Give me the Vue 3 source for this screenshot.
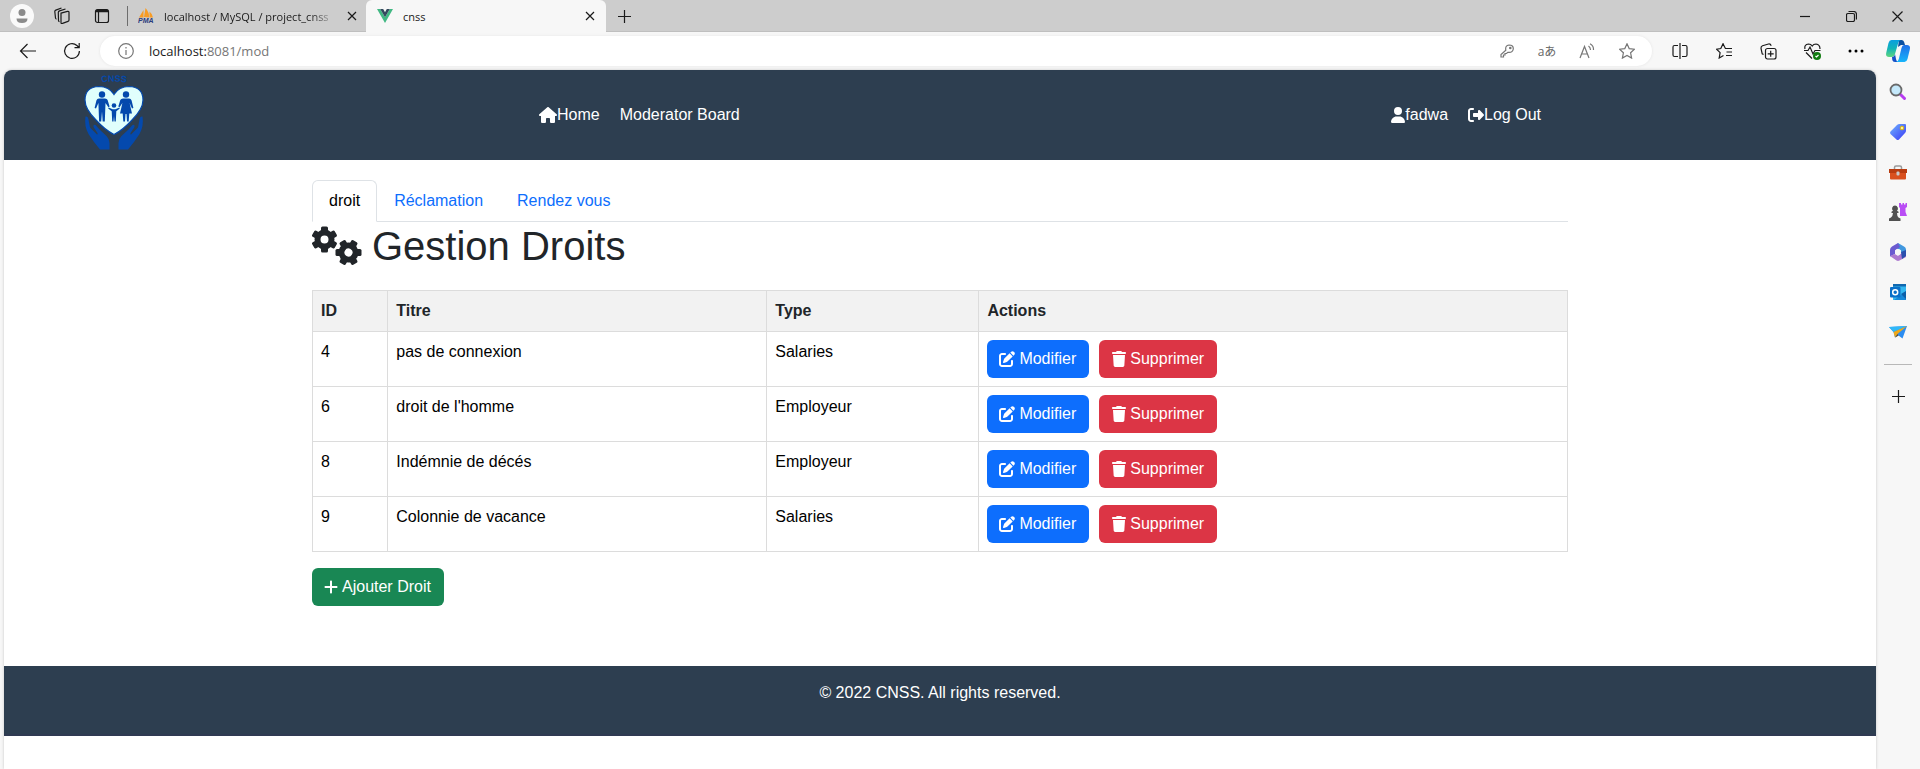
<script setup>
import { ref } from 'vue'

const droits = ref([
  { id: 4, titre: 'pas de connexion', type: 'Salaries' },
  { id: 6, titre: "droit de l'homme", type: 'Employeur' },
  { id: 8, titre: 'Indémnie de décés', type: 'Employeur' },
  { id: 9, titre: 'Colonnie de vacance', type: 'Salaries' },
])

const teeth = [0, 60, 120, 180, 240, 300]

const glyphs = {
  house: 'M575.8 255.5c0 18-15 32.1-32 32.1h-32l.7 160.2c0 2.7-.2 5.4-.5 8.1V472c0 22.1-17.9 40-40 40H456c-1.1 0-2.2 0-3.3-.1c-1.4 .1-2.8 .1-4.2 .1H416 392c-22.1 0-40-17.9-40-40V448 384c0-17.7-14.3-32-32-32H256c-17.7 0-32 14.3-32 32v64 24c0 22.1-17.9 40-40 40H160 128.1c-1.5 0-3-.1-4.5-.2c-1.2 .1-2.4 .2-3.6 .2H104c-22.1 0-40-17.9-40-40V360c0-.9 0-1.9 .1-2.8V287.6H32c-18 0-32-14-32-32.1c0-9 3-17 10-24L266.4 8c7-7 15-8 22-8s15 2 21 7L564.8 231.5c8 7 12 15 11 24z',
  user: 'M224 256A128 128 0 1 0 224 0a128 128 0 1 0 0 256zm-45.7 48C79.8 304 0 383.8 0 482.3C0 498.7 13.3 512 29.7 512H418.3c16.4 0 29.7-13.3 29.7-29.7C448 383.8 368.2 304 269.7 304H178.3z',
  logout: 'M377.9 105.9L500.7 228.7c7.2 7.2 11.3 17.1 11.3 27.3s-4.1 20.1-11.3 27.3L377.9 406.1c-6.4 6.4-15 9.9-24 9.9c-18.7 0-33.9-15.2-33.9-33.9l0-62.1-128 0c-17.7 0-32-14.3-32-32l0-64c0-17.7 14.3-32 32-32l128 0 0-62.1c0-18.7 15.2-33.9 33.9-33.9c9 0 17.6 3.6 24 9.9zM160 96L96 96c-17.7 0-32 14.3-32 32l0 256c0 17.7 14.3 32 32 32l64 0c17.7 0 32 14.3 32 32s-14.3 32-32 32l-64 0c-53 0-96-43-96-96L0 128C0 75 43 32 96 32l64 0c17.7 0 32 14.3 32 32s-14.3 32-32 32z',
  edit: 'M471.6 21.7c-21.9-21.9-57.3-21.9-79.2 0L362.3 51.7l97.9 97.9 30.1-30.1c21.9-21.9 21.9-57.3 0-79.2L471.6 21.7zm-299.2 220c-6.1 6.1-10.8 13.6-13.5 21.9l-29.6 88.8c-2.9 8.6-.6 18.1 5.8 24.6s15.9 8.7 24.6 5.8l88.8-29.6c8.2-2.7 15.7-7.4 21.9-13.5L437.7 172.3 339.7 74.3 172.4 241.7zM96 64C43 64 0 107 0 160V416c0 53 43 96 96 96H352c53 0 96-43 96-96V320c0-17.7-14.3-32-32-32s-32 14.3-32 32v96c0 17.7-14.3 32-32 32H96c-17.7 0-32-14.3-32-32V160c0-17.7 14.3-32 32-32h96c17.7 0 32-14.3 32-32s-14.3-32-32-32H96z',
  trash: 'M135.2 17.7L128 32H32C14.3 32 0 46.3 0 64S14.3 96 32 96H416c17.7 0 32-14.3 32-32s-14.3-32-32-32H320l-7.2-14.3C307.4 6.8 296.3 0 284.2 0H163.8c-12.1 0-23.2 6.8-28.6 17.7zM416 128H32L53.2 467c1.6 25.3 22.6 45 47.9 45H346.9c25.3 0 46.3-19.7 47.9-45L416 128z',
  plus: 'M256 80c0-17.7-14.3-32-32-32s-32 14.3-32 32V224H48c-17.7 0-32 14.3-32 32s14.3 32 32 32H192V432c0 17.7 14.3 32 32 32s32-14.3 32-32V288H400c17.7 0 32-14.3 32-32s-14.3-32-32-32H256V80z',
}
</script>

<template>
  <div class="browser">
    <header class="tabstrip">
      <button class="tool narrow" aria-label="Profile">
        <svg width="24" height="24" viewBox="0 0 24 24"><circle cx="12" cy="12" r="12" fill="#fafafa" /><circle cx="12" cy="8.500" r="3.500" fill="#8b8b8b" /><path d="M6.500 14.500h11q0 4.500-5.500 4.500t-5.500-4.500z" fill="#8b8b8b" /></svg>
      </button>
      <button class="tool" aria-label="Workspaces">
        <svg class="line" width="18" height="18" viewBox="0 0 18 18"><path d="M8 6.200l6.500-1.800q1.500-.3 1.500 1.200v7.500q0 1-1 1.300l-5.500 2q-1.500.5-1.500-1zM5.500 13.500l-.2-8q0-1.200 1.200-1.600L12.500 2M2.500 11l-.7-6.500q0-1 1-1.400L8.500 1M2.500 11q.2 1 1 1.200M5.500 13.500q.1 1 1 1.300" /></svg>
      </button>
      <button class="tool narrow" aria-label="Tab actions menu">
        <svg class="line" width="16" height="16" viewBox="0 0 16 16"><rect x="1.500" y="1.500" width="13" height="13" rx="2" /><path d="M2 3h12" stroke-width="2.500" /><path d="M4.500 4v10.500" /></svg>
      </button>
      <span class="divider"></span>
      <div class="tab">
        <svg width="16" height="16" viewBox="0 0 16 16"><path d="M1 9.500L5.500 2v7.500zM6 9L7.500 0q4 4.500 3.500 9.500zM11.500 3.500q3 2.500 3.500 6h-3.500z" fill="#f89c24" /><text x="0" y="15" class="pma">PMA</text></svg>
        <span class="tab-title faded">localhost / MySQL / project_cnss</span>
        <button class="tab-close" aria-label="Close tab"><svg class="line" width="10" height="10" viewBox="0 0 10 10"><path d="M1 1l8 8M9 1l-8 8" /></svg></button>
      </div>
      <div class="tab active">
        <svg width="16" height="16" viewBox="0 0 16 16"><path d="M0 1h3.200L8 9.300 12.800 1H16L8 15z" fill="#41b883" /><path d="M3.200 1h3L8 4.200 9.800 1h3L8 9.300z" fill="#34495e" /></svg>
        <span class="tab-title">cnss</span>
        <button class="tab-close" aria-label="Close tab"><svg class="line" width="10" height="10" viewBox="0 0 10 10"><path d="M1 1l8 8M9 1l-8 8" /></svg></button>
      </div>
      <button class="tool narrow" aria-label="New tab"><svg class="line" width="13" height="13" viewBox="0 0 13 13"><path d="M6.500 0v13M0 6.500h13" /></svg></button>
      <div class="window-buttons">
        <button aria-label="Minimize"><svg class="line" width="10" height="10" viewBox="0 0 10 10"><path d="M0 5.500h10" /></svg></button>
        <button aria-label="Restore"><svg class="line" width="11" height="11" viewBox="0 0 11 11"><rect x=".5" y="2.500" width="8" height="8" rx="1.500" /><path d="M2.500 .5h5q3 0 3 3v5" /></svg></button>
        <button aria-label="Close"><svg class="line" width="11" height="11" viewBox="0 0 11 11"><path d="M.5 .5l10 10M10.500 .5l-10 10" /></svg></button>
      </div>
    </header>

    <div class="toolbar">
      <button class="tool" aria-label="Back"><svg class="line" width="18" height="16" viewBox="0 0 18 16"><path d="M1.500 8H17M8.500 1L1.500 8l7 7" /></svg></button>
      <button class="tool" aria-label="Refresh"><svg class="line" width="18" height="18" viewBox="0 0 18 18"><path d="M16.400 9a7.400 7.400 0 1 1-2.500-5.500L16 5.500M16.200 1v4.700h-4.700" /></svg></button>
      <div class="address">
        <svg class="line gray" width="16" height="16" viewBox="0 0 16 16"><circle cx="8" cy="8" r="7.300" /><path d="M8 7v5M8 4v1.500" /></svg>
        <span class="url" role="textbox" aria-label="Address">localhost:<span>8081/mod</span></span>
        <div class="address-tools">
          <button aria-label="Passwords"><svg class="line gray" width="14" height="14" viewBox="0 0 14 14"><path d="M1 13v-2.500L5.800 6.200Q5 1.500 9 1q4.500 0 4.300 4-.8 4-5.500 3.300L6.500 9.500H5V11H3.500v2z" /><circle cx="10.300" cy="4" r=".7" /></svg></button>
          <button aria-label="Translate" class="glyph">aあ</button>
          <button aria-label="Read aloud"><svg class="line gray" width="16" height="16" viewBox="0 0 16 16"><path d="M1 15L5.500 3.500 10 15M2.500 11h6M9.500 3q2 1.500 2 4M11 .8q3.800 2 3.500 6.200" /></svg></button>
          <button aria-label="Favorite"><svg class="line gray" width="16" height="16" viewBox="0 0 16 16"><path d="M8 .8l2.200 4.800 5.200.6-3.800 3.600 1 5.300L8 12.500l-4.600 2.600 1-5.300L.6 6.200l5.200-.6z" /></svg></button>
        </div>
      </div>
      <div class="actions">
        <button class="tool" aria-label="Split screen"><svg class="line" width="16" height="16" viewBox="0 0 16 16"><path d="M6 2.500H2.500Q1 2.500 1 4v8q0 1.500 1.500 1.500H6M10 2.500h3.500Q15 2.500 15 4v8q0 1.500-1.500 1.500H10M8 0v16" /></svg></button>
        <button class="tool" aria-label="Favorites"><svg class="line" width="17" height="16" viewBox="0 0 17 16"><path d="M9.500 5.500h-.1L7 .8 4.800 5.500.6 6.200l3.500 3.500-.9 5.300L7.500 12.500M7 .8l2.400 4.700H16M10.500 9H16M10 12.500h6" /></svg></button>
        <button class="tool" aria-label="Collections"><svg class="line" width="17" height="17" viewBox="0 0 17 17"><rect x="5.500" y="5.500" width="10.500" height="10.500" rx="2" /><path d="M10.700 7.800v6M7.700 10.800h6M3.500 11.500l-1.300-.7L1 5.500Q.8 3.500 2.500 2.800l6-1.800q2-.3 2.700 1.700" /></svg></button>
        <button class="tool" aria-label="Browser essentials"><svg class="line" width="17" height="17" viewBox="0 0 17 17"><path d="M1 6Q0 1.500 4.500 1 7 1 8.200 3 9.500 1 12 1q4 .5 4 5M2 9.500l6 6M0 7.500h4L6 4l3 7 2-3.500h5.500" /><circle cx="13" cy="13" r="4" fill="#107c10" stroke="none" /><path d="M11.500 13l1 1 2-2" stroke="#fff" /></svg></button>
        <button class="tool" aria-label="Settings and more"><svg width="16" height="4" viewBox="0 0 16 4"><circle cx="2" cy="2" r="1.500" /><circle cx="8" cy="2" r="1.500" /><circle cx="14" cy="2" r="1.500" /></svg></button>
      </div>
      <button class="tool" aria-label="Copilot">
        <svg width="24" height="22" viewBox="0 0 24 22">
          <defs>
            <linearGradient id="cpA" x1="0" y1="0" x2="0" y2="1"><stop offset="0" stop-color="#0a9fe0" /><stop offset=".5" stop-color="#12b3b8" /><stop offset="1" stop-color="#5fd67e" /></linearGradient>
            <linearGradient id="cpB" x1="0" y1="0" x2="0" y2="1"><stop offset="0" stop-color="#1f6fe8" /><stop offset="1" stop-color="#17b5fa" /></linearGradient>
          </defs>
          <path d="M13 0h2.500q2 0 2.600 2L19 5h-4l-3 2z" fill="#0b4fa0" />
          <path d="M5.500 0H15q-2 0-2.800 3L9 14q-.8 3-3.500 3H3Q-.8 17 .3 12.500L2.500 3Q3.300 0 5.500 0z" fill="url(#cpA)" />
          <path d="M6 17q2.500 0 3-3l1 5q.5 3 3 3H9q-2.300 0-2.700-2z" fill="#1550c8" />
          <path d="M18 5h3q3.800 0 2.800 4.500L21.500 19q-.8 3-3 3H10q2 0 2.800-3L15.500 8q.7-3 2.500-3z" fill="url(#cpB)" />
        </svg>
      </button>
    </div>

    <div class="viewport">
      <div class="page">
        <nav class="navbar" aria-label="Main">
          <a href="#" class="brand" aria-label="CNSS">
            <svg width="60" height="78" viewBox="0 0 60 78">
              <defs><path id="arc" d="M14 11q16-3 32 0" /></defs>
              <text class="logo-text"><textPath href="#arc" startOffset="50%" text-anchor="middle">CNSS</textPath></text>
              <path d="M30 62.500Q21 58 12 48 1 37 1 28 1 15 15 14.500q10 0 15 8 5-8 15-8Q59 15 59 28q0 9-11 20-9 10-18 14.500z" fill="#e0fffc" stroke="#0449ad" stroke-width="1.200" />
              <g fill="#0449ad">
                <circle cx="18" cy="22.500" r="3.200" />
                <path d="M15 26.500h6q2 0 2.600 1.500l2 6.500-1.200.8-2.900-4.300L20.800 49.500h-2.100L18 39.500l-.8 10h-2.100L14.400 31 12 36.500l-1.400-.5L12.400 28.500q.6-2 2.600-2z" />
                <circle cx="42" cy="22.500" r="3.200" />
                <path d="M39 26.500h6q2 0 2.600 2L49.400 36l-1.400.5L45.600 31 48 41.500h-2.700l-.6 8h-1.700L42.500 42h-1L41 49.500h-1.700L38.700 41.500H36L38.400 31l-2.900 4.300-1.200-.8 2-6.500Q37 26.500 39 26.500z" />
                <circle cx="30" cy="33.500" r="2.300" />
                <path d="M24.600 35.500l4 1.700h2.800l4-1.700.4 1-3.500 2.700-.5 10.300h-1.300L30 44l-.5 5.500h-1.300l-.5-10.300-3.500-2.700z" />
                <path d="M1.500 44.500q2.500-.5 3 3l1.500 8 7 7q1 0 .5-1.500L9.500 55q-.5-3 2-2l4 4.500 7 6.500q3 3 3 7v6.500H16L10 70 4.500 62Q0 54 1.500 44.500z" />
                <path d="M58.500 44.500q-2.500-.5-3 3l-1.500 8-7 7q-1 0-.5-1.500l4-6q.5-3-2-2l-4 4.500-7 6.500q-3 3-3 7v6.500H44L50 70l5.500-8q4.500-8 3-17.500z" />
              </g>
            </svg>
          </a>
          <div class="links">
            <a href="#"><svg width="18" height="16" viewBox="0 0 576 512"><path :d="glyphs.house" /></svg>Home</a>
            <a href="#">Moderator Board</a>
          </div>
          <div class="links account">
            <a href="#"><svg width="14" height="16" viewBox="0 0 448 512"><path :d="glyphs.user" /></svg>fadwa</a>
            <a href="#"><svg width="16" height="16" viewBox="0 0 512 512"><path :d="glyphs.logout" /></svg>Log Out</a>
          </div>
        </nav>

        <main class="container">
          <div class="nav-tabs" role="tablist">
            <button role="tab" aria-selected="true" class="selected">droit</button>
            <button role="tab" aria-selected="false">Réclamation</button>
            <button role="tab" aria-selected="false">Rendez vous</button>
          </div>

          <h1>
            <svg width="50" height="40" viewBox="0 0 50 40">
              <g v-for="(gear, i) in [{ x: 12.5, y: 13.5, r: 0 }, { x: 36.5, y: 26.5, r: 30 }]" :key="i" :transform="`translate(${gear.x} ${gear.y}) rotate(${gear.r})`">
                <circle r="7" fill="none" stroke="currentColor" stroke-width="6" />
                <rect v-for="a in teeth" :key="a" x="-3.500" y="-13" width="7" height="6" rx="1.500" :transform="`rotate(${a})`" />
              </g>
            </svg>
            Gestion Droits
          </h1>

          <table>
            <colgroup><col class="c-id" /><col class="c-titre" /><col class="c-type" /><col /></colgroup>
            <thead>
              <tr><th scope="col">ID</th><th scope="col">Titre</th><th scope="col">Type</th><th scope="col">Actions</th></tr>
            </thead>
            <tbody>
              <tr v-for="d in droits" :key="d.id">
                <td>{{ d.id }}</td>
                <td>{{ d.titre }}</td>
                <td>{{ d.type }}</td>
                <td>
                  <div class="row-actions">
                    <button class="btn primary"><svg width="16" height="16" viewBox="0 0 512 512"><path :d="glyphs.edit" /></svg>Modifier</button>
                    <button class="btn danger"><svg width="14" height="16" viewBox="0 0 448 512"><path :d="glyphs.trash" /></svg>Supprimer</button>
                  </div>
                </td>
              </tr>
            </tbody>
          </table>

          <button class="btn success"><svg width="14" height="16" viewBox="0 0 448 512"><path :d="glyphs.plus" /></svg>Ajouter Droit</button>
        </main>

        <footer class="footer">© 2022 CNSS. All rights reserved.</footer>
      </div>

      <aside class="sidebar" aria-label="Browser sidebar">
        <button aria-label="Search"><svg width="18" height="18" viewBox="0 0 18 18"><path d="M10.500 10.500L15.500 15.500" stroke="#b73cf0" stroke-width="3" stroke-linecap="round" /><circle cx="7" cy="7" r="5.500" fill="#c5e9fb" stroke="#6a6a6a" stroke-width="1.800" /></svg></button>
        <button aria-label="Shopping"><svg width="18" height="18" viewBox="0 0 18 18"><defs><linearGradient id="tag" x1="0" y1="0" x2="1" y2="1"><stop offset="0" stop-color="#6fb4ff" /><stop offset="1" stop-color="#3a38f5" /></linearGradient></defs><path d="M8 2q1-1 2.500-1H16q1 0 1 1v5.500q0 1.500-1 2.500l-6 6.500q-1.500 1-2.500 0L1.500 11q-1-1.500 0-2.500z" fill="url(#tag)" /><circle cx="13" cy="5" r="1.800" fill="#f8f0a0" stroke="#e6b800" /></svg></button>
        <button aria-label="Tools"><svg width="18" height="18" viewBox="0 0 18 18"><path d="M5.500 6V4.500Q5.500 3 7 3h4q1.500 0 1.500 1.500V6" fill="none" stroke="#9a9a9a" stroke-width="1.500" /><rect x="1" y="7" width="16" height="9.500" rx="1" fill="#d9501e" /><path d="M0 6h18v4H0z" fill="#b93c10" /><rect x="7.500" y="8.500" width="3" height="4" rx="1" fill="#c9c9c9" /></svg></button>
        <button aria-label="Games"><svg width="18" height="18" viewBox="0 0 18 18"><path d="M10 0h2v1.500h1.500V0h1.500v1.500h1.500V0H18v4l-1.500 1v4l1.500 4h-7V5l-1-1z" fill="#b94df5" /><path d="M6 2.500a3 3 0 0 1 2 5.200l1.500 1V10H8q0 3 1.500 4.500l2 1V18H0v-2.500l2-1Q3.800 13 4 10H2.500V8.700l1.500-1a3 3 0 0 1 2-5.200z" fill="#505050" /></svg></button>
        <button aria-label="Microsoft 365"><svg width="18" height="18" viewBox="0 0 18 18"><path d="M9 0l6 3.500q2 1 2 3V12l-5-3V7.500L6.500 4.500z" fill="#4198df" /><path d="M9 0L3 3.500Q1 4.500 1 7v6.500L6 11V7.500l5-3.500z" fill="#6b5bd0" /><path d="M1 13l6.500 4.500q1.500.8 3 0L17 14V9l-5 1.500L9 13l-3-2z" fill="#ad7ad0" /><path d="M12 9l5-2v6l-4 3z" fill="#2b4fae" /><circle cx="9" cy="9" r="3" fill="#f7f7f7" /></svg></button>
        <button aria-label="Outlook"><svg width="18" height="18" viewBox="0 0 18 18"><path d="M4 1h13v16H4z" fill="#35b8f1" /><path d="M4 1h13v2.500H4z" fill="#1068b0" /><path d="M17 8.500v8.500H5z" fill="#1688d8" /><path d="M12 11l5-3v8z" fill="#0c5fa8" /><rect x="1" y="4" width="10.500" height="10.500" rx="1" fill="#0a6fc8" /><circle cx="6.200" cy="9.200" r="2.500" fill="none" stroke="#fff" stroke-width="1.500" /></svg></button>
        <button aria-label="Drop"><svg width="18" height="18" viewBox="0 0 18 18"><path d="M0 4l18-1-4.500 12.500-4-3-3.500 2L4.500 9z" fill="#2b8cf0" /><path d="M0 4l18-1L4.500 9z" fill="#30b8f8" /><path d="M18 3L4.500 9 6 14.500 8.500 11z" fill="#f0a818" /><path d="M8.500 11l1 1.500-3.500 2z" fill="#704c20" /></svg></button>
        <hr />
        <button aria-label="Customize"><svg class="line" width="13" height="13" viewBox="0 0 13 13"><path d="M6.500 0v13M0 6.500h13" /></svg></button>
      </aside>
    </div>
  </div>
</template>

<style>
body {
  background: #f7f7f7;
}
</style>

<style scoped>
* {
  box-sizing: border-box;
}
.browser {
  display: flex;
  flex-direction: column;
  min-height: 100vh;
  font-family: "Open Sans", "Noto Sans", sans-serif;
  color: #1a1a1a;
}
button {
  display: inline-flex;
  align-items: center;
  justify-content: center;
  border: 0;
  padding: 0;
  background: none;
  color: inherit;
  font: inherit;
  cursor: pointer;
}
svg {
  flex: none;
}
.line {
  fill: none;
  stroke: #1a1a1a;
  stroke-width: 1.2;
}
.line.gray {
  stroke: #767676;
}
.tabstrip {
  display: flex;
  align-items: center;
  height: 32px;
  padding-left: 4px;
  background: #cdcdcd;
  box-shadow: inset 0 -1px #bfbfbf;
}
.tool {
  width: 44px;
  height: 32px;
}
.tool.narrow {
  width: 36px;
}
.divider {
  width: 1px;
  height: 20px;
  margin-left: 7px;
  background: #6d6d6d;
}
.tab {
  display: flex;
  align-items: center;
  gap: 10px;
  width: 238px;
  height: 32px;
  padding: 0 8px 0 10px;
  font-size: 11px;
}
.tab.active {
  width: 240px;
  padding: 0 10px 0 11px;
  border-radius: 6px 6px 0 0;
  background: #f7f7f7;
}
.tab-title {
  flex: 1;
  overflow: hidden;
  white-space: nowrap;
}
.tab-title.faded {
  -webkit-mask-image: linear-gradient(90deg, #000 85%, transparent);
  mask-image: linear-gradient(90deg, #000 85%, transparent);
}
.tab-close {
  width: 12px;
  height: 20px;
}
.pma {
  font: italic bold 7px "Liberation Sans", Arial, sans-serif;
  fill: #2a3a7c;
}
.window-buttons {
  display: flex;
  margin-left: auto;
}
.window-buttons button {
  width: 46px;
  height: 32px;
}
.toolbar {
  display: flex;
  align-items: center;
  height: 38px;
  padding-left: 6px;
  background: #f7f7f7;
}
.address {
  display: flex;
  flex: 1;
  align-items: center;
  height: 30px;
  margin: 0 4px 0 6px;
  padding: 0 5px 0 18px;
  border-radius: 15px;
  background: #fff;
  box-shadow: 0 0 3px #e4e4e4;
}
.url {
  margin-left: 15px;
  font-size: 13px;
}
.url span {
  color: #767676;
}
.address-tools {
  display: flex;
  margin-left: auto;
}
.address-tools button {
  width: 40px;
  height: 28px;
}
.address-tools .glyph {
  font: 12px "Open Sans", "Noto Sans CJK JP", sans-serif;
  color: #666;
}
.actions {
  display: flex;
  padding-left: 2px;
  margin-right: -2px;
}
.viewport {
  display: flex;
  flex: 1;
}
.page {
  flex: 1;
  min-width: 0;
  margin-left: 4px;
  overflow: hidden;
  border-radius: 8px 8px 0 0;
  background: #fff;
  box-shadow: 0 0 3px #c4c4c4;
  font: 16px/24px "Liberation Sans", Arial, sans-serif;
}
.navbar {
  display: flex;
  align-items: center;
  height: 90px;
  padding: 0 327px 0 80px;
  background: #2d3e50;
}
.brand {
  display: flex;
  padding-bottom: 8px;
}
.logo-text {
  font: bold 9px "Liberation Sans", Arial, sans-serif;
  fill: #0449ad;
}
.links {
  display: flex;
  margin-left: 387px;
}
.links.account {
  margin-left: auto;
}
.links a {
  display: flex;
  align-items: center;
  padding: 8px;
  margin-right: 4px;
  color: #fff;
  text-decoration: none;
}
.links a:last-child {
  margin-right: 0;
}
.links svg,
.btn svg,
h1 svg {
  fill: currentColor;
}
.container {
  max-width: 1280px;
  margin: 0 auto;
  padding: 20px 12px 60px;
}
.nav-tabs {
  display: flex;
  border-bottom: 1px solid #dee2e6;
}
.nav-tabs button {
  margin-bottom: -1px;
  padding: 8px 16px;
  border: 1px solid transparent;
  border-radius: 6px 6px 0 0;
  color: #0d6efd;
}
.nav-tabs .selected {
  border-color: #dee2e6 #dee2e6 #fff;
  background: #fff;
  color: #000;
}
h1 {
  display: flex;
  align-items: center;
  gap: 10px;
  margin: 0 0 20px;
  color: #212529;
  font-size: 40px;
  font-weight: 400;
  line-height: 48px;
}
table {
  width: 100%;
  margin-bottom: 16px;
  border-collapse: collapse;
  table-layout: fixed;
}
.c-id {
  width: 6%;
}
.c-titre {
  width: 30.2%;
}
.c-type {
  width: 16.9%;
}
th,
td {
  padding: 8px;
  border: 1px solid #dcdcdc;
  color: #000;
  text-align: left;
  vertical-align: top;
}
th {
  background: #f2f2f2;
  color: #212529;
}
.row-actions {
  display: flex;
  gap: 10px;
}
.btn {
  gap: 4px;
  padding: 7px 13px 7px 12px;
  border-radius: 6px;
  color: #fff;
}
.danger {
  padding-left: 13px;
}
.primary {
  background: #0d6efd;
}
.danger {
  background: #dc3545;
}
.success {
  background: #198754;
}
.footer {
  padding: 15px 0 29px;
  border-bottom: 2px solid #2f3a52;
  background: #2d3e50;
  color: #fff;
  text-align: center;
}
.sidebar {
  display: flex;
  flex-direction: column;
  align-items: center;
  width: 44px;
  padding-top: 2px;
}
.sidebar button {
  width: 40px;
  height: 40px;
}
.sidebar hr {
  width: 28px;
  height: 1px;
  margin: 12px 0 11px;
  border: 0;
  background: #b8b8b8;
}
</style>
